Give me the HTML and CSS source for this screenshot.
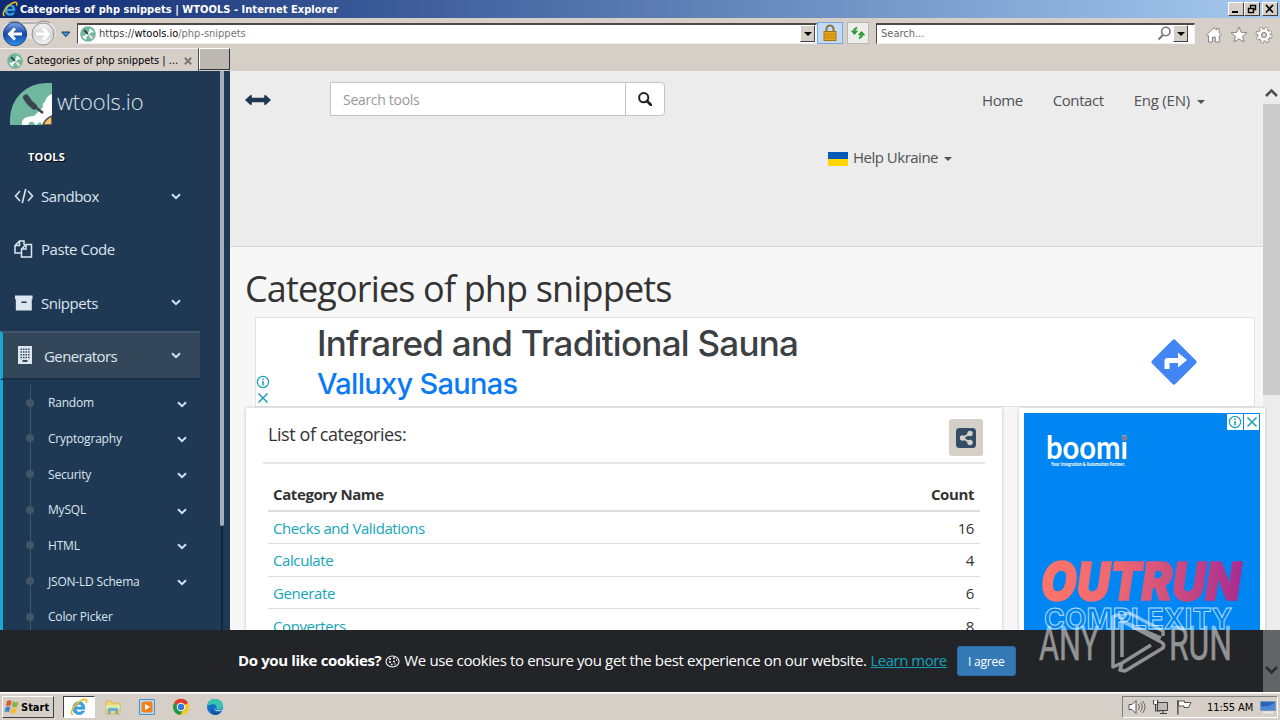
FILE: index.html
```
<!DOCTYPE html>
<html lang="en">

<head>
  <meta charset="utf-8">
  <meta name="viewport" content="width=device-width, initial-scale=1.0">
  <title>Categories of php snippets | WTOOLS</title>
  <link rel="stylesheet" href="styles.css">
</head>

<body>
  <!-- shared icons -->
  <svg class="sprite" width="0" height="0">
    <symbol id="chevron" viewBox="0 0 10 7">
      <path d="M1 1.2l4 4 4-4" fill="none" stroke="currentColor" stroke-width="2" />
    </symbol>
    <symbol id="tools" viewBox="0 0 16 16">
      <circle cx="8" cy="8" r="7.8" fill="#70b7a0" />
      <path d="M4.500 11.500l6.500-6.500" stroke="#fff" stroke-width="2.400" />
      <path d="M3 10l1.500 1.500L6 13M10 3l1 2 2.500 1" stroke="#fff" stroke-width="1.800" fill="none" />
      <path d="M4 4l4 4" stroke="#35404a" stroke-width="1.800" />
      <path d="M9.500 9.500l3 3" stroke="#f4e3c0" stroke-width="2.400" />
    </symbol>
    <symbol id="ie" viewBox="0 0 20 20">
      <path d="M16.5 12.5H6.8c.2 2.200 1.600 3.200 3.400 3.200 1.300 0 2.200-.5 2.700-1.300h3.300c-1 2.700-3.300 4-6.100 4-4.200 0-7-2.800-7-7s2.900-7.100 6.900-7.100c4.300 0 6.700 3 6.500 8.200zM6.900 9.900h6.200c-.2-1.900-1.400-2.900-3.100-2.900-1.600 0-2.800 1-3.100 2.900z" fill="#35a5e8" stroke="#1476bd" stroke-width=".5" />
      <path d="M3.500 18.300C.8 18.500 1 15 3.700 10.800 7.500 5 14.700.5 17.600 1.700c1.300.6 1.200 2.300.4 4.200" fill="none" stroke="#f2bd1d" stroke-width="1.800" />
    </symbol>
    <symbol id="info" viewBox="0 0 14 14">
      <circle cx="7" cy="7" r="5.600" fill="none" stroke="#1a9fbb" stroke-width="1.200" />
      <path d="M7 6v4.500M7 3.500v1.400" stroke="#1a9fbb" stroke-width="1.500" />
    </symbol>
    <symbol id="close" viewBox="0 0 14 14">
      <path d="M2.500 2.500l9 9m0-9l-9 9" stroke="#1a9fbb" stroke-width="1.500" />
    </symbol>
  </svg>

  <div class="window">
    <div class="titlebar">
      <svg width="16" height="16"><use href="#ie" /></svg>
      <span class="titlebar-text">Categories of php snippets | WTOOLS - Internet Explorer</span>
      <div class="win-buttons">
        <span class="win-btn"><svg width="12" height="10"><path d="M2 8h6" stroke="#000" stroke-width="2" /></svg></span>
        <span class="win-btn"><svg width="12" height="10"><path d="M4.500 4V1.500h5v4H8M2.500 4.500h5v4h-5zM4 1.500h6M2 4.500h6" stroke="#000" stroke-width="1.400" fill="none" /></svg></span>
        <span class="win-btn last"><svg width="12" height="10"><path d="M2 1l7 7.500M9 1L2 8.500" stroke="#000" stroke-width="1.700" /></svg></span>
      </div>
    </div>

    <div class="navbar">
      <svg class="nav-arrows" width="58" height="28" viewBox="0 0 58 28">
        <defs>
          <linearGradient id="blueBall" x1="0" y1="0" x2="0" y2="1">
            <stop offset="0" stop-color="#7fa8e2" />
            <stop offset=".5" stop-color="#1746a8" />
            <stop offset="1" stop-color="#2f93ea" />
          </linearGradient>
          <linearGradient id="greyBall" x1="0" y1="0" x2="0" y2="1">
            <stop offset="0" stop-color="#f6f6f6" />
            <stop offset=".5" stop-color="#d3d3d6" />
            <stop offset="1" stop-color="#f1f2f4" />
          </linearGradient>
        </defs>
        <path d="M14 2h30a12 12 0 0 1 0 24q-8 0-13-6h-4q-5 6-13 6a12 12 0 0 1 0-24z" fill="#e6e3df" />
        <path d="M8 4q6-4 13 0h16q6-4 13 0" fill="none" stroke="#858585" />
        <circle cx="15" cy="15" r="11.700" fill="url(#blueBall)" stroke="#28477e" />
        <path d="M22 15H10m5-5.500L9.500 15l5.500 5.500" fill="none" stroke="#fff" stroke-width="3" />
        <circle cx="43" cy="15" r="11" fill="url(#greyBall)" stroke="#8f9094" />
        <path d="M36 15h12m-5-5.500l5.500 5.500-5.500 5.500" fill="none" stroke="#fff" stroke-width="3" />
      </svg>
      <svg class="nav-drop" width="10" height="7"><path d="M.8 1h8L4.800 5.800z" fill="#3f8fd0" stroke="#163f68" /></svg>
      <div class="address">
        <svg width="16" height="16"><use href="#tools" /></svg>
        <span class="url">https://<b>wtools.io</b><i>/php-snippets</i></span>
        <span class="drop-btn"></span>
      </div>
      <span class="nav-btn lock">
        <svg width="16" height="18" viewBox="0 0 16 18">
          <path d="M4.500 8V5a3.500 3.500 0 0 1 7 0v3" fill="none" stroke="#8d7440" stroke-width="2" />
          <rect x="2" y="7.500" width="12" height="9" fill="#e8a91c" stroke="#a77205" />
          <path d="M3 10h10M3 12h10M3 14h10" stroke="#c78810" />
        </svg>
      </span>
      <span class="nav-btn refresh">
        <svg width="16" height="16" viewBox="0 0 16 16">
          <path d="M1.500 6h6L4.500 9.500z" fill="#2e9b37" stroke="#2e9b37" />
          <path d="M4.500 6V4.500L7 2.500M11.500 10v1.500L9 13.500" fill="none" stroke="#2e9b37" stroke-width="2" />
          <path d="M8.500 10h6l-3-3.500z" fill="#2e9b37" stroke="#2e9b37" />
        </svg>
      </span>
      <div class="ie-search">
        <span>Search...</span>
        <svg width="15" height="15" viewBox="0 0 15 15">
          <circle cx="8.800" cy="5.500" r="4.200" fill="none" stroke="#777" stroke-width="1.600" />
          <path d="M6 9l-4.500 4.500" stroke="#777" stroke-width="2.200" />
        </svg>
        <span class="drop-btn"></span>
      </div>
      <div class="ie-tools">
        <svg width="18" height="18" viewBox="0 0 18 18"><path d="M1.500 9L9 1.700l2.500 2.400V2.500h2.500v4L16.500 9l-1.200 1.200-1-.8V16h-4v-5H7.500v5h-4V9.400l-1 .8z" fill="#fff" stroke="#8a8682" /></svg>
        <svg width="18" height="18" viewBox="0 0 18 18"><path d="M9 1l2.200 5.300 5.800.4-4.400 3.700L14 16l-5-3.100L4 16l1.400-5.600L1 6.700l5.800-.4z" fill="#fff" stroke="#8a8682" /></svg>
        <svg width="18" height="18" viewBox="0 0 18 18">
          <circle cx="9" cy="9" r="6.500" fill="none" stroke="#8a8682" stroke-width="4" stroke-dasharray="2.900 2.200" />
          <circle cx="9" cy="9" r="6" fill="none" stroke="#8a8682" stroke-width="1.500" />
          <circle cx="9" cy="9" r="6.500" fill="none" stroke="#fff" stroke-width="2.600" stroke-dasharray="1.900 3.200" stroke-dashoffset="-.5" />
          <circle cx="9" cy="9" r="4.300" fill="none" stroke="#fff" stroke-width="3" />
          <circle cx="9" cy="9" r="2.600" fill="#d6cfc8" stroke="#8a8682" />
        </svg>
      </div>
    </div>

    <div class="tabs">
      <div class="tab">
        <svg width="16" height="16"><use href="#tools" /></svg>
        <span class="tab-text">Categories of php snippets | ...</span>
        <svg width="8" height="8"><path d="M.8.8l6.400 6.400m0-6.400L.8 7.200" stroke="#777" stroke-width="2" /></svg>
      </div>
      <div class="new-tab"></div>
    </div>

    <div class="viewport">
      <aside class="sidebar">
        <div class="menu">
          <div class="brand">
            <svg width="42" height="42" viewBox="0 0 42 42">
              <path d="M42 0H36A36 36 0 0 0 0 36v6h42z" fill="#70b7a0" />
              <path d="M12 42q-1-6 5-8 4-1 7-1l9-9q-1-4 2-5 1-6 7-8v31h-9l-3-3-4 3z" fill="#fff" />
              <path d="M33 42q2-6 9-9v9z" fill="#f4c06a" stroke="#4b4a45" stroke-width="1.500" />
              <path d="M25 42q-1-4-5-3l-2 3z" fill="#70b7a0" />
              <path d="M16 14.500l3.500 5 4.500 4" stroke="#39454f" stroke-width="6" stroke-linecap="round" fill="none" />
              <path d="M24 23l9 7" stroke="#39454f" stroke-width="2.500" />
            </svg>
            <span>wtools.io</span>
          </div>
          <h3>TOOLS</h3>
          <ul class="side-menu">
            <li>
              <svg class="icon" width="20" height="18" viewBox="0 0 20 18"><path d="M6 4L1.500 9 6 14M14 4l4.500 5-4.500 5M11.700 2L8.300 16" fill="none" stroke="currentColor" stroke-width="1.600" /></svg>
              <span>Sandbox</span><svg class="chev" width="10" height="7"><use href="#chevron" /></svg>
            </li>
            <li>
              <svg class="icon" width="20" height="18" viewBox="0 0 20 18"><path d="M7 13H1V5.500L5.500 1H10v4M5.500 1v4.500H1M7.500 17V9L12 4.500h5.500V17zM12 4.500V9H7.500" fill="none" stroke="currentColor" stroke-width="1.500" /></svg>
              <span>Paste Code</span>
            </li>
            <li>
              <svg class="icon" width="20" height="18" viewBox="0 0 20 18"><path d="M1 1.500h17.500v3.700H1zM1.800 5h16v11.500h-16z" fill="currentColor" /><path d="M8 8.300h4" stroke="#1f3853" stroke-width="1.600" stroke-linecap="round" /></svg>
              <span>Snippets</span><svg class="chev" width="10" height="7"><use href="#chevron" /></svg>
            </li>
            <li class="active">
              <svg class="icon" width="20" height="18" viewBox="0 0 20 18"><path d="M1 0h14v18H1z" fill="currentColor" /><path d="M3.500 3.200h9.500M3.500 6h9.500M3.500 8.800h9.500M3.500 11.600h9.500" stroke="#344659" stroke-width="1.500" stroke-dasharray="1.500 1" /><path d="M5.500 14h5v2h-5z" fill="#344659" /></svg>
              <span>Generators</span><svg class="chev" width="10" height="7"><use href="#chevron" /></svg>
            </li>
          </ul>
          <ul class="child-menu">
            <li><span>Random</span><svg class="chev" width="10" height="7"><use href="#chevron" /></svg></li>
            <li><span>Cryptography</span><svg class="chev" width="10" height="7"><use href="#chevron" /></svg></li>
            <li><span>Security</span><svg class="chev" width="10" height="7"><use href="#chevron" /></svg></li>
            <li><span>MySQL</span><svg class="chev" width="10" height="7"><use href="#chevron" /></svg></li>
            <li><span>HTML</span><svg class="chev" width="10" height="7"><use href="#chevron" /></svg></li>
            <li><span>JSON-LD Schema</span><svg class="chev" width="10" height="7"><use href="#chevron" /></svg></li>
            <li><span>Color Picker</span></li>
          </ul>
        </div>
        <div class="side-scroll"><div class="side-thumb"></div></div>
      </aside>

      <main class="page">
        <header class="top-nav">
          <div class="top-row">
            <svg class="toggle" width="26" height="12" viewBox="0 0 26 12"><path d="M1 6l5-4.300V4.500h14V1.700L25 6l-5 4.300V7.500H6v2.800z" fill="#1f3853" stroke="#1f3853" stroke-width="1.600" stroke-linejoin="round" /></svg>
            <div class="search-group">
              <span class="search-input">Search tools</span>
              <span class="search-btn"><svg width="14" height="14" viewBox="0 0 14 14"><circle cx="5.700" cy="5.700" r="4.600" fill="none" stroke="#222" stroke-width="2" /><path d="M9 9l4 4" stroke="#222" stroke-width="2.800" stroke-linecap="round" /></svg></span>
            </div>
            <nav class="links">
              <a>Home</a><a>Contact</a><a>Eng (EN)<i class="caret"></i></a>
            </nav>
          </div>
          <div class="help-row"><i class="flag"></i><a>Help Ukraine<i class="caret"></i></a></div>
        </header>

        <h1>Categories of php snippets</h1>

        <div class="banner">
          <div class="ad-marks">
            <svg width="14" height="14"><use href="#info" /></svg>
            <svg width="14" height="14"><use href="#close" /></svg>
          </div>
          <div class="banner-text">
            <div class="banner-title">Infrared and Traditional Sauna</div>
            <div class="banner-sub">Valluxy Saunas</div>
          </div>
          <svg width="46" height="46" viewBox="0 0 46 46">
            <rect x="6.500" y="6.500" width="33" height="33" rx="2" fill="#4285f4" transform="rotate(45 23 23)" />
            <path d="M13.500 30v-8q0-3 3-3H27v-5.500l9 7.500-9 7.500V24h-8.500v6z" fill="#fff" />
          </svg>
        </div>

        <div class="columns">
          <section class="panel">
            <div class="panel-title">
              <h2>List of categories:</h2>
              <span class="share"><svg width="20" height="20" viewBox="0 0 20 20"><rect width="20" height="20" rx="3.500" fill="#344d66" /><path d="M14 5.500L6.500 10l7.500 4.500" stroke="#d4cfc7" stroke-width="2" fill="none" /><circle cx="14" cy="5.500" r="2.700" fill="#d4cfc7" /><circle cx="6.500" cy="10" r="2.700" fill="#d4cfc7" /><circle cx="14" cy="14.500" r="2.700" fill="#d4cfc7" /></svg></span>
            </div>
            <table>
              <tr><th>Category Name</th><th>Count</th></tr>
              <tr><td><a>Checks and Validations</a></td><td>16</td></tr>
              <tr><td><a>Calculate</a></td><td>4</td></tr>
              <tr><td><a>Generate</a></td><td>6</td></tr>
              <tr><td><a>Converters</a></td><td>8</td></tr>
            </table>
          </section>

          <section class="side-ad">
            <svg width="236" height="280" viewBox="0 0 236 280">
              <defs>
                <linearGradient id="sunset">
                  <stop offset="0" stop-color="#ff7568" />
                  <stop offset=".4" stop-color="#ec6572" />
                  <stop offset="1" stop-color="#a72c91" />
                </linearGradient>
              </defs>
              <rect width="236" height="280" fill="#0086f2" />
              <text class="boomi" x="22" y="46" textLength="82" lengthAdjust="spacingAndGlyphs">boomi</text>
              <circle cx="100.500" cy="25" r="2.800" fill="#7d7f98" />
              <text class="tagline" x="27" y="52.500" textLength="74" lengthAdjust="spacingAndGlyphs">Your Integration &amp; Automation Partner.</text>
              <text class="outrun" x="17" y="187" textLength="200" lengthAdjust="spacingAndGlyphs">OUTRUN</text>
              <text class="complexity" x="20" y="215.500" textLength="188" lengthAdjust="spacingAndGlyphs">COMPLEXITY</text>
            </svg>
            <div class="ad-corner">
              <span><svg width="14" height="14"><use href="#info" /></svg></span>
              <span><svg width="14" height="14"><use href="#close" /></svg></span>
            </div>
          </section>
        </div>
      </main>

      <div class="scrollbar">
        <svg width="17" height="33" viewBox="0 0 17 33"><path d="M3 25l5.500-5.500L14 25" fill="none" stroke="#505050" stroke-width="2.600" /></svg>
        <div class="thumb"></div>
      </div>

      <div class="cookie-bar">
        <div class="cookie-text">
          <b>Do you like cookies?</b>
          <svg width="15" height="15" viewBox="0 0 15 15"><ellipse cx="7.500" cy="7.500" rx="6.500" ry="5.500" fill="none" stroke="#fff" stroke-width="1.100" /><path d="M4 5h2M8 4h2M4 8h2M8 7.500h2M6 10.500h1.500M9.500 10h1M11 6h1" stroke="#fff" stroke-width="1.600" /></svg>
          <span>We use cookies to ensure you get the best experience on our website.</span>
          <a>Learn more</a>
          <span class="agree">I agree</span>
        </div>
        <div class="bar-edge"><svg width="17" height="12" viewBox="0 0 17 12"><path d="M3 3l5.500 5.500L14 3" fill="none" stroke="#2b2c2e" stroke-width="2.600" /></svg></div>
      </div>
    </div>

    <div class="taskbar">
      <div class="start">
        <svg width="16" height="16" viewBox="0 0 16 16">
          <path d="M3 2q2.500-1.500 4.500 0L6.500 7Q4 5.800 2 7z" fill="#e5562c" />
          <path d="M8.500 2.500q3 1.500 6 0L13.300 7.500q-3 1.500-5.500 0z" fill="#84b63f" />
          <path d="M1.700 8.200Q4 7 6.200 8.200L5 13.200q-2.500-1.400-4.500 0z" fill="#3d83c9" />
          <path d="M7.400 8.800q3 1.500 5.500 0l-1.200 5q-3 1.500-5.500 0z" fill="#f3bd30" />
        </svg>
        <b>Start</b>
      </div>
      <div class="task-icons">
        <span class="task active"><svg width="18" height="18"><use href="#ie" /></svg></span>
        <span class="task"><svg width="18" height="18" viewBox="0 0 18 18"><path d="M2 3h5l1 2h8v11H2z" fill="#f2d577" stroke="#c7a944" stroke-width=".7" /><path d="M2 7h14v4H2z" fill="#d9e9a8" /><path d="M4 16V11q0-1 1-1h8q1 0 1 1v5h-2.500v-3h-5v3z" fill="#63aed6" /></svg></span>
        <span class="task"><svg width="18" height="18" viewBox="0 0 18 18"><path d="M1.500 1.500h15v15h-15z" fill="#b8d7ee" stroke="#4c92c7" /><rect x="3.500" y="3.500" width="11" height="11" rx="2.500" fill="#f18118" /><path d="M7 6l5 3-5 3z" fill="#fff" /></svg></span>
        <span class="task"><svg width="18" height="18" viewBox="0 0 18 18"><circle cx="9" cy="9" r="8" fill="#f8c91c" /><path d="M9 9L2 5a8 8 0 0 1 14 0z" fill="#dc3d2d" /><path d="M9 9L2.100 5A8 8 0 0 0 8 17l4-6z" fill="#21964c" /><circle cx="9" cy="9" r="4.200" fill="#fff" /><circle cx="9" cy="9" r="3.200" fill="#3377df" /></svg></span>
        <span class="task"><svg width="18" height="18" viewBox="0 0 18 18"><circle cx="9" cy="9" r="8" fill="#1470c4" /><path d="M1 8C2 3 5 1 9 1c5 0 8 3 8 6.500 0 3-2.500 4-5 4-1.500 0-2-.5-1.500-1.500C11.500 7 8 4.500 1 8z" fill="#35c5b0" /><path d="M6.500 9c-1.500 4 3 7 8.500 4.500-1.500 2.500-4 3.500-6 3.500-3-1-5-5-2.500-8z" fill="#124f9f" /><path d="M9.500 9q-1.500 2.500 1.500 3.200 3 .6 5.500-1l.3.600q-4 2.500-7 .8-2-1.500-.3-3.600z" fill="#e7eef2" /></svg></span>
      </div>
      <div class="tray">
        <svg width="18" height="16" viewBox="0 0 18 16"><path d="M1 5.500h3l4-4v13l-4-4H1z" fill="#fff" stroke="#555" /><path d="M10.500 5q2 3 0 6M12.500 3.500q3.500 4.500 0 9M14.500 2q5 6 0 12" fill="none" stroke="#666" /></svg>
        <svg width="17" height="16" viewBox="0 0 17 16"><path d="M4.500 3.500h10v8h-10z" fill="#bbb" stroke="#444" /><path d="M.6 1v4h4V1M2.600 5v7h5M7 14.500h7M10 11.500v3" fill="none" stroke="#444" stroke-width="1.200" /><path d="M1 2h3v3H1z" fill="#fff" /></svg>
        <svg width="17" height="16" viewBox="0 0 17 16"><path d="M1.500 2h6v1.500h6.500l-2.500 5H7V7H1.500z" fill="#fff" stroke="#555" /><path d="M.8 1v14.500" stroke="#555" stroke-width="1.500" /></svg>
        <span class="clock">11:55 AM</span>
        <svg width="16" height="14" viewBox="0 0 16 14"><path d="M.5 1.500h15v9H.5z" fill="#2a63b8" stroke="#8096b8" /><path d="M1 6q7 2 14-4v8H1z" fill="#5a9be6" opacity=".7" /><path d="M3 12.500h10" stroke="#e7eaf0" stroke-width="2" /></svg>
      </div>
    </div>
  </div>

  <svg class="watermark" width="196" height="64" viewBox="0 0 196 64">
    <g fill="none" stroke="#fff" stroke-width="3.500" stroke-linejoin="round">
      <path d="M85 47V10q-1-8-9-3v50l9-4 29-18M85 11l39 17M86 6q4-5 10-1l30 16v5M85 53l-2 7 5 1 38-23q2-4-2-6L85 11" />
    </g>
    <text x="2" y="50" textLength="60" lengthAdjust="spacingAndGlyphs">ANY</text>
    <text x="132" y="50" textLength="63" lengthAdjust="spacingAndGlyphs">RUN</text>
  </svg>
</body>

</html>
```

FILE: styles.css
```
* {
  box-sizing: border-box;
}

html,
body {
  height: 100%;
  margin: 0;
  padding: 0;
  overflow: hidden;
}

body {
  font-family: "Open Sans", "Noto Sans", sans-serif;
  font-size: 15px;
  color: #333;
}

ul {
  list-style-type: none;
  margin: 0;
  padding: 0;
}

svg {
  display: block;
  flex-shrink: 0;
}

.sprite {
  position: absolute;
}

.window {
  width: 1280px;
  height: 720px;
  display: flex;
  flex-direction: column;
  background-color: #d6cfc8;
}

/* browser chrome */
.titlebar,
.navbar,
.tabs,
.taskbar {
  font-family: "DejaVu Sans Condensed", "DejaVu Sans", sans-serif;
  font-stretch: condensed;
  font-size: 11px;
  color: #000;
  flex-shrink: 0;
}

.titlebar {
  height: 18px;
  display: flex;
  align-items: center;
  padding: 0 2px;
  background: linear-gradient(90deg, #0d2a72, #a6caf0);
}

.titlebar-text {
  color: #fff;
  font-weight: bold;
  margin-left: 2px;
  letter-spacing: 0.04px;
  white-space: nowrap;
}

.win-buttons {
  display: flex;
  margin-left: auto;
}

.win-btn {
  width: 16px;
  height: 14px;
  padding: 1px;
  background-color: #d6cfc8;
  border: 1px solid;
  border-color: #fff #404040 #404040 #fff;
}

.win-btn.last {
  margin-left: 2px;
}

.navbar {
  height: 30px;
  display: flex;
  align-items: center;
}

.nav-drop {
  margin: 2px 6px 0 3px;
}

.address,
.ie-search {
  display: flex;
  align-items: center;
  height: 21px;
  background-color: #fff;
  border: 1px solid #f3f1ee;
  border-top: 2px solid #4c4946;
  border-left: 1px solid #4c4946;
}

.address {
  width: 740px;
  padding: 0 1px 0 2px;
}

.url {
  margin-left: 3px;
  color: #444;
  letter-spacing: -0.01px;
}

.url b {
  font-weight: normal;
  color: #000;
}

.url i {
  font-style: normal;
  color: #777;
}

.drop-btn {
  width: 15px;
  height: 17px;
  margin-left: auto;
  background-color: #d6cfc8;
  border: 1px solid;
  border-color: #fff #404040 #404040 #fff;
  display: flex;
  align-items: center;
  justify-content: center;
}

.drop-btn::before {
  content: "";
  border: 4px solid transparent;
  border-top-color: #000;
  border-bottom: none;
}

.nav-btn {
  display: flex;
  align-items: center;
  justify-content: center;
  height: 22px;
}

.lock {
  width: 26px;
  background-color: #c3daf6;
  border: 1px solid #7ba7e0;
}

.refresh {
  width: 22px;
  margin-left: 4px;
  background-color: #edeeec;
  border: 1px solid #bab7b2;
}

.ie-search {
  width: 319px;
  margin-left: 7px;
  padding: 0 6px 0 4px;
  color: #666;
}

.ie-search svg {
  margin-left: auto;
}

.ie-search .drop-btn {
  margin-left: 1px;
}

.ie-tools {
  display: flex;
  gap: 7px;
  margin: 4px 0 0 10px;
}

.tabs {
  height: 23px;
  display: flex;
}

.tab {
  width: 199px;
  display: flex;
  align-items: center;
  padding: 1px 6px 0 7px;
  border-top: 1px solid #f5f3f0;
  border-right: 1px solid #4c4946;
}

.tab-text {
  flex: 1;
  margin-left: 4px;
  letter-spacing: -0.03px;
  white-space: nowrap;
}

.new-tab {
  width: 31px;
  height: 22px;
  background-color: #beb8b2;
  border: 1px solid;
  border-color: #fff #333 #333 #fff;
}

/* page area */
.viewport {
  position: relative;
  height: 622px;
  flex-shrink: 0;
  display: flex;
  overflow: hidden;
}

.sidebar {
  width: 230px;
  display: flex;
  background-color: #1f3853;
  color: #dce6ef;
}

.menu {
  width: 200px;
}

.brand {
  display: flex;
  height: 66px;
  padding: 12px 0 0 10px;
}

.brand span {
  margin: 2px 0 0 5px;
  font-size: 22px;
  line-height: 32px;
  font-weight: 300;
  letter-spacing: -0.1px;
}

.menu h3 {
  margin: 0;
  height: 34px;
  padding: 12px 0 0 28px;
  font-size: 11px;
  line-height: 16px;
  letter-spacing: 0.15px;
  color: #fff;
  text-shadow: 1px 1px #000;
}

.side-menu li {
  display: flex;
  align-items: center;
  height: 53.300px;
  padding: 0 19px 3px 14px;
  letter-spacing: -0.45px;
}

.side-menu .icon {
  margin-right: 7px;
}

.side-menu .active {
  height: 49px;
  padding-bottom: 0;
  letter-spacing: -0.6px;
  background-color: #344659;
  border-top: 2px solid #43566a;
  border-bottom: 2px solid #1a2e45;
  border-left: 3px solid #18a9d2;
}

.side-menu .active span {
  padding-top: 1px;
}

.chev {
  margin-left: auto;
  color: #cfe3f5;
}

.child-menu {
  border-left: 3px solid #18a9d2;
  padding: 5px 13px 0 27px;
  background: linear-gradient(#425668, #425668) 27px 5px / 1px 300px no-repeat;
}

.child-menu li {
  display: flex;
  align-items: center;
  height: 35.700px;
  font-size: 12px;
  letter-spacing: -0.2px;
}

.child-menu .chev {
  margin-top: 3px;
}

.child-menu li::before {
  content: "";
  width: 8px;
  height: 8px;
  margin: 0 14px 0 -4px;
  border-radius: 50%;
  background-color: #425668;
}

.side-scroll {
  width: 4px;
  margin-left: 20px;
  background: linear-gradient(90deg, #1f3853 1px, #0e2740 1px, #0e2740 3px, #1f3853 3px);
}

.side-thumb {
  height: 455px;
  background-color: #a3adbd;
  border-radius: 0 0 3px 3px;
}

.page {
  width: 1033px;
  background-color: #f7f7f7;
}

.top-nav {
  height: 176px;
  background-color: #ececec;
  border-bottom: 1px solid #d6d9dc;
}

.top-row {
  display: flex;
  align-items: center;
  height: 56px;
  padding-left: 15px;
}

.toggle {
  margin-top: 2px;
}

.search-group {
  display: flex;
  width: 335px;
  height: 34px;
  margin-left: 59px;
  background-color: #fff;
  border: 1px solid #c4c4c4;
  border-radius: 0 4px 4px 0;
}

.search-input {
  flex: 1;
  padding-left: 12px;
  font-size: 14px;
  line-height: 34px;
  letter-spacing: -0.3px;
  color: #999;
}

.search-btn {
  width: 39px;
  border-left: 1px solid #c4c4c4;
  display: flex;
  align-items: center;
  justify-content: center;
}

.links {
  display: flex;
  gap: 30px;
  margin: 1px 0 0 317px;
}

.links a,
.help-row a {
  color: #515356;
  letter-spacing: -0.42px;
  white-space: nowrap;
}

.links a:last-child {
  letter-spacing: -0.22px;
}

.caret {
  display: inline-block;
  margin-left: 7px;
  vertical-align: 2px;
  border: 4px solid transparent;
  border-top-color: #515356;
  border-bottom: none;
}

.help-row {
  display: flex;
  align-items: center;
  height: 60px;
  padding-left: 598px;
}

.help-row a {
  padding-bottom: 1px;
  letter-spacing: -0.5px;
}

.help-row .caret {
  margin-left: 6px;
}

.flag {
  width: 20px;
  height: 14px;
  margin: 3px 5px 0 0;
  background: linear-gradient(#005bbb 50%, #ffd500 50%);
}

h1 {
  margin: 0;
  height: 70px;
  padding: 17px 0 0 15px;
  font-size: 36px;
  line-height: 50px;
  font-weight: 400;
  letter-spacing: -0.85px;
  white-space: nowrap;
}

.banner {
  display: flex;
  align-items: center;
  width: 1000px;
  height: 90px;
  margin-left: 25px;
  padding: 0 57px 1px 0;
  background-color: #fff;
  border: 1px solid #e2e2e2;
}

.ad-marks {
  align-self: flex-end;
}

.ad-marks svg + svg {
  margin-top: 2px;
}

.banner-text {
  flex: 1;
  margin-left: 47px;
  font-family: Inter, sans-serif;
  font-weight: 500;
  white-space: nowrap;
}

.banner-title {
  font-size: 35px;
  line-height: 44px;
  letter-spacing: -0.74px;
  color: #3c4043;
}

.banner-sub {
  font-size: 29px;
  line-height: 38px;
  letter-spacing: -0.7px;
  color: #0b7bf5;
}

.columns {
  display: flex;
  gap: 17px;
  margin: 1px 0 0 16px;
}

.panel {
  width: 756px;
  height: 300px;
  flex-shrink: 0;
  padding: 0 17px;
  background-color: #fff;
  box-shadow: 0 0 3px #bbb;
}

.panel-title {
  display: flex;
  justify-content: space-between;
  height: 56px;
  padding: 11px 2px 0 5px;
  border-bottom: 2px solid #e4e6ea;
}

.panel-title h2 {
  margin: 4px 0 0;
  height: 21px;
  overflow: hidden;
  font-size: 18px;
  line-height: 23px;
  font-weight: 400;
  letter-spacing: -0.42px;
}

.share {
  display: flex;
  align-items: center;
  justify-content: center;
  width: 34px;
  height: 37px;
  border-radius: 3px;
  background-color: #d4cfc7;
}

table {
  width: 712px;
  margin: 13px 0 0 5px;
  border-collapse: collapse;
}

th,
td {
  height: 32.500px;
  padding: 2px 5px 0;
  line-height: 21px;
  text-align: left;
  border-top: 1px solid #ddd;
  letter-spacing: -0.4px;
}

th {
  height: 34px;
  border-top: none;
  border-bottom: 2px solid #ddd;
}

th + th,
td + td {
  padding-right: 6px;
  text-align: right;
}

td a {
  color: #12a5bb;
}

.side-ad {
  position: relative;
  width: 246px;
  height: 300px;
  flex-shrink: 0;
  padding: 5px;
  background-color: #fff;
  box-shadow: 0 0 3px #bbb;
}

.ad-corner {
  position: absolute;
  top: 6px;
  right: 6px;
  display: flex;
  gap: 1px;
}

.ad-corner span {
  padding: 1px;
  background-color: #fff;
}

.ad-corner span + span {
  padding-right: 0;
}

.boomi {
  font: 700 32px Lato, sans-serif;
  fill: #fff;
}

.tagline {
  font: 700 4.500px "Open Sans", sans-serif;
  fill: #fff;
}

.outrun {
  font: italic 900 52px Inter, sans-serif;
  fill: url(#sunset);
  stroke: url(#sunset);
  stroke-width: 1.500px;
}

.complexity {
  font: 700 29px Inter, sans-serif;
  fill: none;
  stroke: #b4dcff;
  stroke-width: 1px;
}

.scrollbar {
  width: 17px;
  flex-shrink: 0;
  background-color: #ececec;
}

.thumb {
  height: 291px;
  background-color: #cbcbcb;
}

.cookie-bar {
  position: absolute;
  left: 0;
  bottom: 0;
  display: flex;
  width: 1280px;
  height: 63px;
  background-color: #222427;
  border-bottom: 1px solid #fff;
}

.cookie-text {
  display: flex;
  align-items: center;
  width: 1263px;
  padding-left: 238px;
  color: #fff;
  letter-spacing: -0.37px;
  white-space: nowrap;
}

.cookie-text b,
.cookie-text span:not(.agree),
.cookie-text a {
  padding-bottom: 2px;
}

.cookie-text svg {
  margin: 0 4px;
}

.cookie-text a {
  margin-left: 4px;
  letter-spacing: -0.5px;
  color: #17a2b8;
  text-decoration: underline;
}

.agree {
  margin-left: 10px;
  width: 59px;
  height: 30px;
  border: 1px solid #2e6da4;
  border-radius: 3px;
  background-color: #337ab7;
  font-size: 12px;
  line-height: 29px;
  text-align: center;
  letter-spacing: -0.2px;
}

.bar-edge {
  width: 17px;
  padding-top: 34px;
  background-color: #626466;
}

/* taskbar */
.taskbar {
  height: 27px;
  display: flex;
  align-items: center;
  border-top: 1px solid #efece8;
}

.start {
  display: flex;
  align-items: center;
  width: 52px;
  height: 22px;
  margin-left: 2px;
  padding-left: 1px;
  border: 1px solid;
  border-color: #fff #404040 #404040 #fff;
}

.start b {
  margin-left: 1px;
}

.task-icons {
  display: flex;
  gap: 2px;
  margin-left: 9px;
}

.task {
  display: flex;
  align-items: center;
  justify-content: center;
  width: 32px;
  height: 22px;
}

.task.active {
  background-color: #fff;
  border: 1px solid;
  border-color: #404040 #fff #fff #404040;
}

.tray {
  display: flex;
  align-items: center;
  gap: 7px;
  width: 156px;
  height: 22px;
  margin: 0 2px 0 auto;
  padding-left: 5px;
  border: 1px solid;
  border-color: #808080 #fff #fff #808080;
}

.clock {
  margin-left: 6px;
  letter-spacing: -0.1px;
  white-space: nowrap;
}

.watermark {
  position: absolute;
  left: 1037px;
  top: 610px;
  opacity: 0.5;
}

.watermark text {
  font: 400 49px Roboto, sans-serif;
  fill: #fff;
  stroke: #fff;
  stroke-width: 0.5px;
}
```
